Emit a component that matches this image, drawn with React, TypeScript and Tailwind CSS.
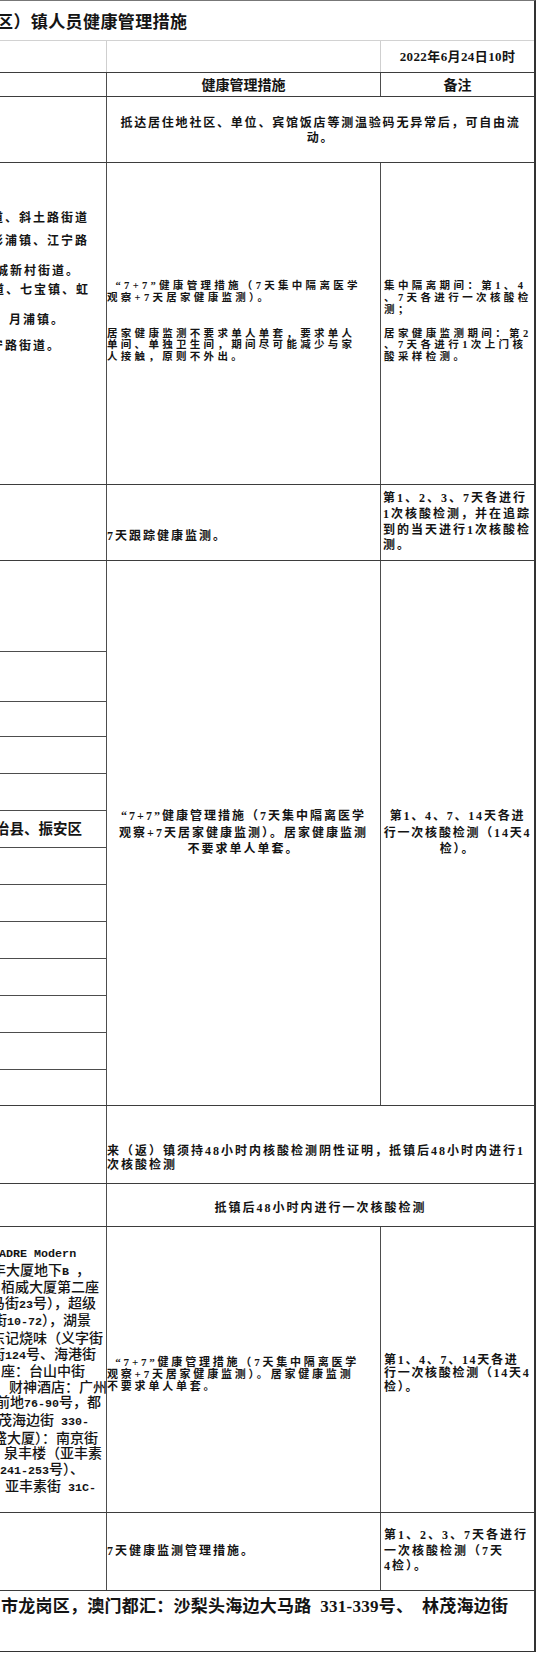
import React from 'react';

type Frag = { text: string; cls: string };

// left column of the big "7+7" row: tails of longer lines, cut by the crop
const leftRow2: Frag[] = [
  { text: '道、斜土路街道', cls: 'mt-[49px] ml-[-9px]' },
  { text: '彭浦镇、江宁路', cls: 'mt-[10px] ml-[-9px]' },
  { text: '城新村街道。', cls: 'mt-[16px] ml-[-4px]' },
  { text: '道、七宝镇、虹', cls: 'mt-[6px] ml-[-8px]' },
  { text: '月浦镇。', cls: 'mt-[17px] ml-[9px]' },
  { text: '宁路街道。', cls: 'mt-[13px] ml-[-9px]' },
];

const leftRow7: Frag[] = [
  { text: 'ADRE Modern', cls: 'ml-[-1px]' },
  { text: '丰大厦地下B ，', cls: 'ml-[-8px]' },
  { text: '栢威大厦第二座', cls: 'ml-[1px]' },
  { text: '马街23号），超级', cls: 'ml-[-9px]' },
  { text: '街10-72），湖景', cls: 'ml-[-7px]' },
  { text: '东记烧味（义字街', cls: 'ml-[-9px]' },
  { text: '街124号、海港街', cls: 'ml-[-9px]' },
  { text: '座：台山中街', cls: 'ml-[1px]' },
  { text: '财神酒店：广州', cls: 'ml-[9px]' },
  { text: '前地76-90号，都', cls: 'ml-[-4px]' },
  { text: '茂海边街 330-', cls: 'ml-[-2px]' },
  { text: '盛大厦）：南京街', cls: 'ml-[-7px]' },
  { text: '泉丰楼（亚丰素', cls: 'ml-[4px]' },
  { text: '241-253号）、', cls: 'ml-[0px]' },
  { text: '亚丰素街 31C-', cls: 'ml-[5px]' },
];

// sub-rows of the left column inside the 14-day block
const subRows = [
  'h-[91px]', 'h-[50px]', 'h-[35px]', 'h-[37px]', 'h-[37px]', 'h-[37px]', 'h-[37px]',
  'h-[37px]', 'h-[37px]', 'h-[37px]', 'h-[37px]', 'h-[37px]', 'h-[36px]',
];

// latin runs in the address list are set in a narrow mono face, like the sheet
const mix = (s: string) =>
  s.split(/([\x20-\x7e]+)/).map((p, i) =>
    /^[\x20-\x7e]+$/.test(p) ? (
      <span key={i} className="font-['Liberation_Mono',monospace] text-[11.7px] font-bold">
        {p}
      </span>
    ) : (
      p
    ),
  );

const Left: React.FC<{ children?: React.ReactNode; className?: string }> = ({ children, className = '' }) => (
  <div className={`w-[107px] shrink-0 border-r border-[#4d4d4d] overflow-hidden ${className}`}>{children}</div>
);

const Mid: React.FC<{ children?: React.ReactNode; className?: string }> = ({ children, className = '' }) => (
  <div className={`w-[274px] shrink-0 border-r border-[#4d4d4d] ${className}`}>{children}</div>
);

const Right: React.FC<{ children?: React.ReactNode; className?: string }> = ({ children, className = '' }) => (
  <div className={`w-[153px] shrink-0 ${className}`}>{children}</div>
);

const Lines: React.FC<{ lines: string[] }> = ({ lines }) => (
  <>
    {lines.map((l, i) => (
      <div key={i} className="whitespace-nowrap">{l}</div>
    ))}
  </>
);

const QUOTE_LINE = '\u2002“7+7”健康管理措施（7天集中隔离医学';

export default function App() {
  return (
    <div className="w-[540px] h-[1654px] bg-white overflow-hidden font-['Liberation_Serif','Noto_Sans_CJK_SC',serif] text-[#141414]">
      <div className="w-[536px] border-t border-r-2 border-b border-t-[#777] border-r-[#333] border-b-[#333]">
        {/* title */}
        <div className="h-[40px] border-b border-[#d2d2d2] flex items-center pt-[5px] overflow-hidden">
          <h1 className="ml-[-4px] text-[17px] leading-[20px] font-bold tracking-[0.4px] whitespace-nowrap">
            区）镇人员健康管理措施
          </h1>
        </div>

        {/* date */}
        <div className="h-[32px] border-b border-[#3d3d3d] flex">
          <div className="w-[107px] shrink-0 border-r border-[#cfcfcf]" />
          <div className="w-[274px] shrink-0 border-r border-[#cfcfcf]" />
          <div className="w-[153px] flex items-center justify-center text-[13px] font-bold tracking-[0.4px]">
            2022年6月24日10时
          </div>
        </div>

        {/* header */}
        <div className="h-[24px] border-b border-[#3d3d3d] flex text-[14px] font-bold">
          <Left />
          <Mid className="flex items-center justify-center pt-[2px]">健康管理措施</Mid>
          <Right className="flex items-center justify-center pt-[2px]">备注</Right>
        </div>

        {/* free movement */}
        <div className="h-[66px] border-b border-[#3d3d3d] flex font-bold">
          <Left />
          <div className="w-[427px] flex items-center justify-center text-center text-[12px] leading-[15px] tracking-[1.8px] pt-[2px]">
            <div>
              抵达居住地社区、单位、宾馆饭店等测温验码无异常后，可自由流
              <br />
              动。
            </div>
          </div>
        </div>

        {/* 7+7 quarantine */}
        <div className="h-[322px] border-b border-[#3d3d3d] flex font-bold text-[10.5px] leading-[11.7px]">
          <Left className="flex flex-col text-[12px] leading-[13.3px] tracking-[2px]">
            {leftRow2.map((f, i) => (
              <div key={i} className={`whitespace-nowrap ${f.cls}`}>{f.text}</div>
            ))}
          </Left>
          <Mid className="flex flex-col justify-center pb-[4px] tracking-[3.3px]">
            <div>
              <Lines lines={[QUOTE_LINE, '观察+7天居家健康监测）。']} />
            </div>
            <div className="mt-[24px]">
              <Lines lines={['居家健康监测不要求单人单套，要求单人', '单间、单独卫生间，期间尽可能减少与家', '人接触，原则不外出。']} />
            </div>
          </Mid>
          <Right className="flex flex-col justify-center pl-[3px] pb-[4px] tracking-[3.4px]">
            <div>
              <Lines lines={['集中隔离期间：第1、4', '、7天各进行一次核酸检', '测；']} />
            </div>
            <div className="mt-[12px]">
              <Lines lines={['居家健康监测期间：第2', '、7天各进行1次上门核', '酸采样检测。']} />
            </div>
          </Right>
        </div>

        {/* follow-up monitoring */}
        <div className="h-[76px] border-b border-[#3d3d3d] flex font-bold text-[12px] tracking-[2px]">
          <Left />
          <Mid className="flex items-end pb-[16px] leading-[15px]">7天跟踪健康监测。</Mid>
          <Right className="flex flex-col justify-center pl-[2px] leading-[15.6px]">
            <Lines lines={['第1、2、3、7天各进行', '1次核酸检测，并在追踪', '到的当天进行1次核酸检', '测。']} />
          </Right>
        </div>

        {/* 14 day block */}
        <div className="h-[545px] border-b border-[#3d3d3d] flex font-bold text-[12px] tracking-[2px]">
          <Left className="flex flex-col">
            {subRows.map((h, i) => (
              <div
                key={i}
                className={`${h} shrink-0 flex items-center overflow-hidden ${i < subRows.length - 1 ? 'border-b border-[#4d4d4d]' : ''}`}
              >
                {i === 5 && (
                  <span className="ml-[-5px] whitespace-nowrap text-[14.5px] tracking-[0px] font-bold leading-[18px]">
                    治县、振安区
                  </span>
                )}
              </div>
            ))}
          </Left>
          <Mid className="flex items-center justify-center text-center leading-[16.5px]">
            <div>
              <Lines lines={['“7+7”健康管理措施（7天集中隔离医学', '观察+7天居家健康监测）。居家健康监测', '不要求单人单套。']} />
            </div>
          </Mid>
          <Right className="flex items-center justify-center text-center leading-[16.5px] tracking-[1.8px]">
            <div>
              <Lines lines={['第1、4、7、14天各进', '行一次核酸检测（14天4', '检）。']} />
            </div>
          </Right>
        </div>

        {/* arriving with 48h test */}
        <div className="h-[78px] border-b border-[#3d3d3d] flex font-bold text-[12px] tracking-[2px]">
          <Left />
          <div className="w-[427px] flex items-end pb-[11px] leading-[13.3px]">
            <div>
              来（返）镇须持48小时内核酸检测阴性证明，抵镇后48小时内进行1
              <br />
              次核酸检测
            </div>
          </div>
        </div>

        <div className="h-[43px] border-b border-[#3d3d3d] flex font-bold text-[12px] tracking-[2px]">
          <Left />
          <div className="w-[427px] flex items-center justify-center pt-[5px]">抵镇后48小时内进行一次核酸检测</div>
        </div>

        {/* Macau places */}
        <div className="h-[286px] border-b border-[#3d3d3d] flex font-bold">
          <Left className="pt-[18px] text-[14px] leading-[15.6px] font-medium">
            {leftRow7.map((f, i) => (
              <div key={i} className={`whitespace-nowrap ${f.cls}`}>{mix(f.text)}</div>
            ))}
          </Left>
          <Mid className="flex flex-col justify-center pt-[9px] text-[11px] leading-[12.3px] tracking-[2.8px]">
            <Lines lines={[QUOTE_LINE, '观察+7天居家健康监测）。居家健康监测', '不要求单人单套。']} />
          </Mid>
          <Right className="flex flex-col justify-center pl-[3px] pt-[9px] text-[12px] leading-[13.3px] tracking-[1.7px]">
            <Lines lines={['第1、4、7、14天各进', '行一次核酸检测（14天4', '检）。']} />
          </Right>
        </div>

        {/* 7 day monitoring */}
        <div className="h-[78px] border-b border-[#3d3d3d] flex font-bold text-[12px] tracking-[2px]">
          <Left />
          <Mid className="flex items-center leading-[15px]">7天健康监测管理措施。</Mid>
          <Right className="flex flex-col justify-center pl-[3px] leading-[15.6px]">
            <Lines lines={['第1、2、3、7天各进行', '一次核酸检测（7天', '4检）。']} />
          </Right>
        </div>

        {/* footnote line */}
        <div className="h-[60px] pt-[6px] overflow-hidden">
          <div className="ml-[1px] whitespace-nowrap text-[17px] leading-[19px] font-bold tracking-[0.25px]">
            市龙岗区，澳门都汇：沙梨头海边大马路{'\u2002'}331-339号、{'\u2002'}林茂海边街
          </div>
        </div>
      </div>
    </div>
  );
}
